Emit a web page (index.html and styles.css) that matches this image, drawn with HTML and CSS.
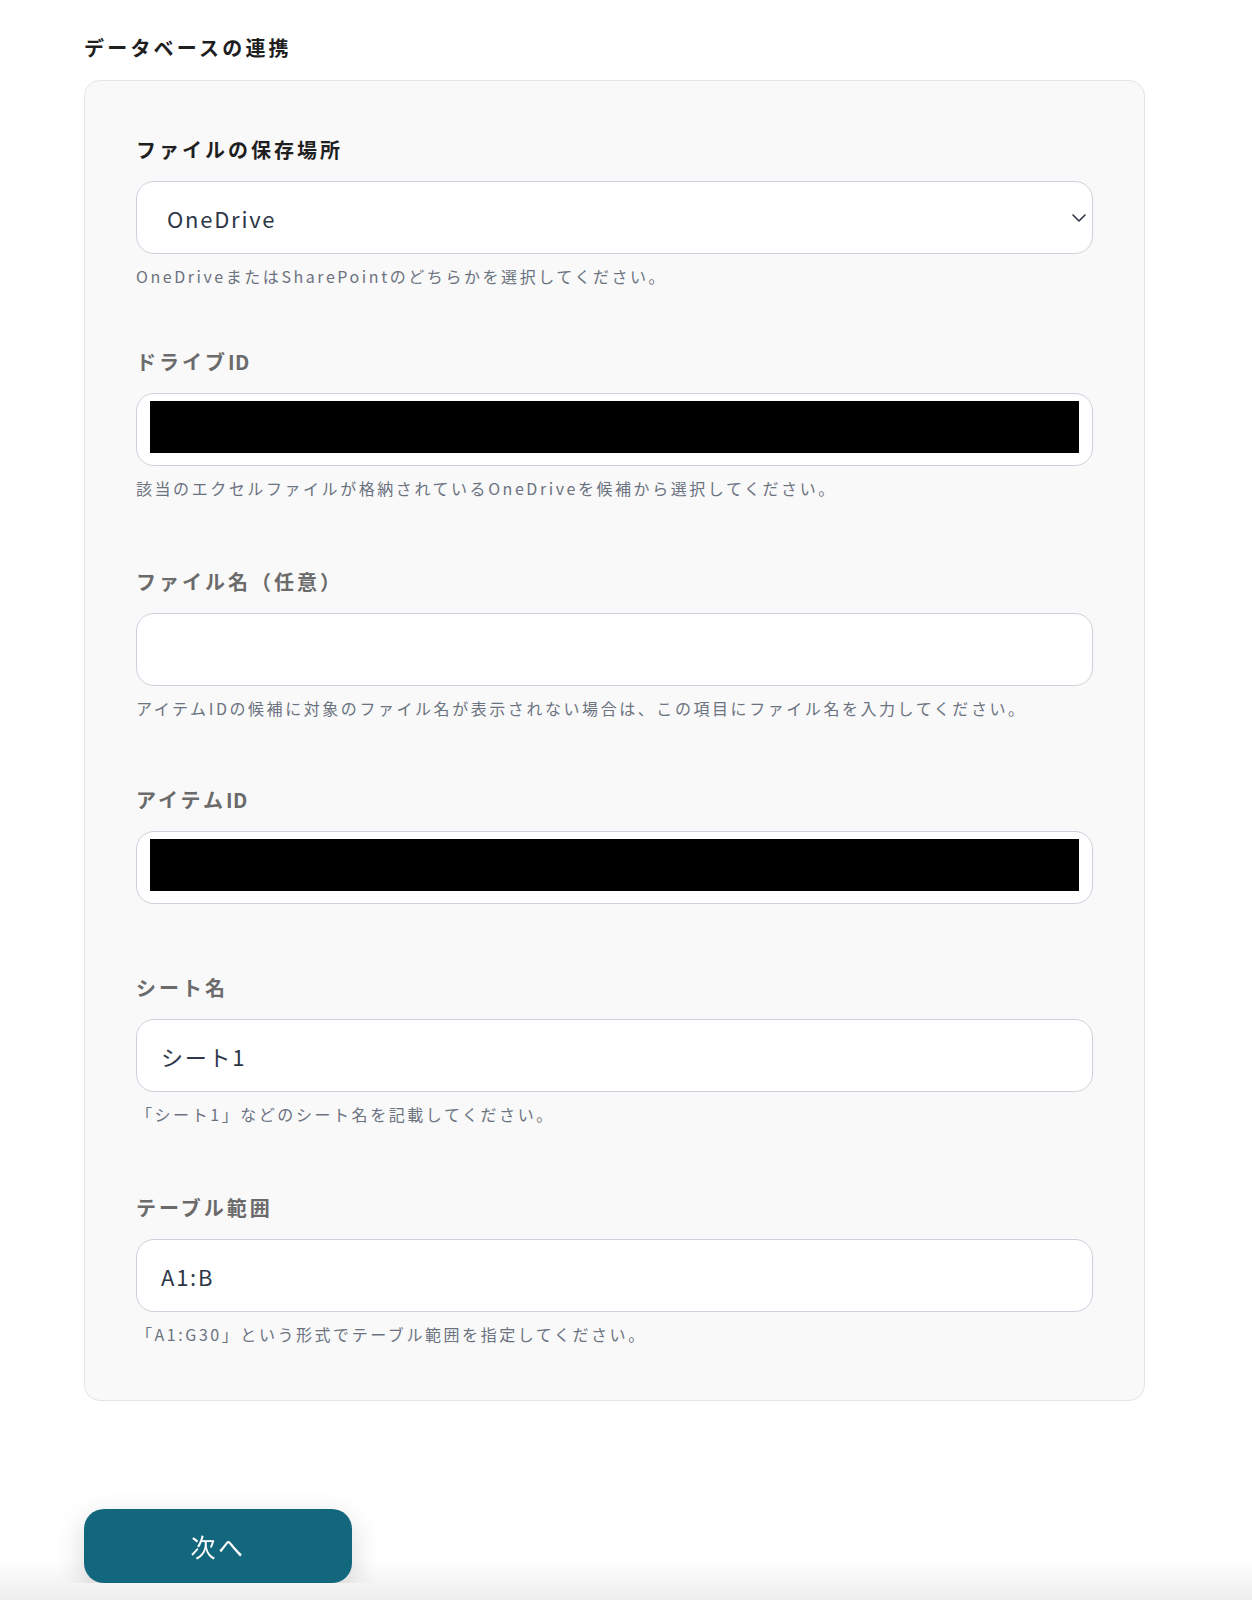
FILE: index.html
```html
<!DOCTYPE html>
<html lang="ja">
<head>
    <meta charset="UTF-8">
    <meta name="viewport" content="width=device-width, initial-scale=1.0">
    <title>データベースの連携</title>
    <link rel="stylesheet" href="styles.css">
</head>
<body>
    <div class="page">
        <h2 class="section-title">データベースの連携</h2>
        <div class="card">
            <div class="field">
                <label class="field-label field-label-dark">ファイルの保存場所</label>
                <div class="control select">
                    <span>OneDrive</span>
                    <svg class="chevron" width="14" height="8" viewBox="0 0 14 8">
                        <path d="M1 1l6 6 6-6" fill="none" stroke="#2d3748" stroke-width="1.6" stroke-linecap="round" stroke-linejoin="round"/>
                    </svg>
                </div>
                <p class="help">OneDriveまたはSharePointのどちらかを選択してください。</p>
            </div>

            <div class="field field-after-select">
                <label class="field-label">ドライブ<span class="latin">ID</span></label>
                <div class="control redacted">
                    <div class="redaction"></div>
                </div>
                <p class="help">該当のエクセルファイルが格納されているOneDriveを候補から選択してください。</p>
            </div>

            <div class="field">
                <label class="field-label">ファイル名（任意）</label>
                <div class="control"></div>
                <p class="help">アイテムIDの候補に対象のファイル名が表示されない場合は、この項目にファイル名を入力してください。</p>
            </div>

            <div class="field field-short">
                <label class="field-label">アイテム<span class="latin">ID</span></label>
                <div class="control redacted">
                    <div class="redaction"></div>
                </div>
            </div>

            <div class="field field-after-bare">
                <label class="field-label">シート名</label>
                <div class="control">シート1</div>
                <p class="help">「シート1」などのシート名を記載してください。</p>
            </div>

            <div class="field">
                <label class="field-label">テーブル範囲</label>
                <div class="control">A1:B</div>
                <p class="help">「A1:G30」という形式でテーブル範囲を指定してください。</p>
            </div>
        </div>

        <button class="next-button" type="button">次へ</button>
    </div>
    <div class="bottom-shade"></div>
</body>
</html>
```

FILE: styles.css
```css
body {
    margin: 0;
    background-color: #ffffff;
    font-family: "Noto Sans CJK JP", "Noto Sans", sans-serif;
    color: #1f1f1f;
}
.page {
    width: 1061px;
    padding: 34px 0 0 84px;
}
.section-title {
    margin: 0 0 18px;
    font-size: 20px;
    line-height: 28px;
    font-weight: 700;
    letter-spacing: 0.16em;
    color: #1f1f1f;
}
.card {
    background-color: #f9f9f9;
    border: 1px solid #e2e5ea;
    border-radius: 16px;
    padding: 55px 51px 54px;
}
.field {
    margin-top: 68px;
}
.field:first-child {
    margin-top: 0;
}
.field-after-select {
    margin-top: 60px;
}
.field-short {
    margin-top: 66px;
}
.field-after-bare {
    margin-top: 70px;
}
.field-label {
    display: block;
    margin-bottom: 17px;
    font-size: 20px;
    line-height: 28px;
    font-weight: 700;
    letter-spacing: 0.15em;
    color: #6b6b6b;
}
.field-label-dark {
    color: #1f1f1f;
}
.latin {
    letter-spacing: 0.02em;
}
.control {
    box-sizing: border-box;
    height: 73px;
    display: flex;
    align-items: center;
    padding: 0 24px;
    background-color: #ffffff;
    border: 1px solid #cbd2dc;
    border-radius: 18px;
    font-size: 22px;
    letter-spacing: 0.08em;
    color: #2d3748;
}
.select {
    justify-content: space-between;
    padding: 0 6px 0 30px;
}
.chevron {
    display: block;
}
.redacted {
    align-items: stretch;
    padding: 7px 13px 12px;
}
.redaction {
    flex: 1;
    background-color: #000000;
}
.help {
    margin: 10px 0 0;
    font-size: 16px;
    line-height: 24px;
    letter-spacing: 0.16em;
    color: #6b7280;
}
.next-button {
    position: relative;
    z-index: 1;
    display: block;
    margin-top: 108px;
    width: 268px;
    height: 74px;
    border: none;
    border-radius: 20px;
    background-color: #13677d;
    color: #ffffff;
    font-family: "Noto Sans CJK JP", "Noto Sans", sans-serif;
    font-size: 25px;
    letter-spacing: 0.1em;
    box-shadow: 0 10px 30px rgba(0, 0, 0, 0.16);
    cursor: pointer;
}
.bottom-shade {
    position: fixed;
    left: 0;
    right: 0;
    bottom: 0;
    height: 40px;
    background: linear-gradient(to bottom, rgba(238, 238, 238, 0), #ededed);
    pointer-events: none;
}
```
